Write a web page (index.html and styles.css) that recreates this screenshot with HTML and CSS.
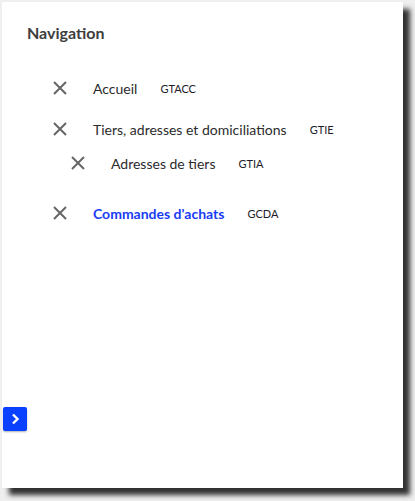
FILE: index.html
```html
<!DOCTYPE html>
<html lang="fr">
<head>
<meta charset="utf-8">
<link rel="stylesheet" href="styles.css">
</head>
<body>
<div class="panel">
  <h1 class="title">Navigation</h1>
  <ul class="nav">
    <li class="item">
      <span class="close"><svg viewBox="0 0 14 14" width="14" height="14"><path d="M1 1L13 13M13 1L1 13" stroke="#666" stroke-width="2"/></svg></span>
      <span class="label">Accueil</span><span class="code">GTACC</span>
    </li>
    <li class="item gap-md">
      <span class="close"><svg viewBox="0 0 14 14" width="14" height="14"><path d="M1 1L13 13M13 1L1 13" stroke="#666" stroke-width="2"/></svg></span>
      <span class="label">Tiers, adresses et domiciliations</span><span class="code">GTIE</span>
    </li>
    <li class="item sub gap-sm">
      <span class="close"><svg viewBox="0 0 14 14" width="14" height="14"><path d="M1 1L13 13M13 1L1 13" stroke="#666" stroke-width="2"/></svg></span>
      <span class="label">Adresses de tiers</span><span class="code">GTIA</span>
    </li>
    <li class="item active gap-lg">
      <span class="close"><svg viewBox="0 0 14 14" width="14" height="14"><path d="M1 1L13 13M13 1L1 13" stroke="#666" stroke-width="2"/></svg></span>
      <span class="label">Commandes d'achats</span><span class="code">GCDA</span>
    </li>
  </ul>
  <button class="toggle" type="button"><svg viewBox="0 0 24 24" width="24" height="24"><path d="M10 7.5L14.5 12L10 16.5" fill="none" stroke="#fff" stroke-width="2.4"/></svg></button>
</div>
</body>
</html>
```
FILE: styles.css
```css
html, body {
  margin: 0;
  padding: 0;
  background: #efefef;
  font-family: Lato, "Noto Sans", sans-serif;
}
body {
  height: 501px;
  overflow: hidden;
  padding: 2px 0 0 2px;
  box-sizing: border-box;
}
.panel {
  position: relative;
  box-sizing: border-box;
  width: 401px;
  height: 486px;
  background: #fff;
  box-shadow: 7px 7px 5px rgba(0,0,0,0.8);
  padding: 21px 0 0 25px;
}
.title {
  margin: 0;
  font-size: 16px;
  font-weight: 700;
  color: #3d3d3d;
  line-height: 20px;
}
.nav {
  list-style: none;
  margin: 0;
  padding: 35px 0 0 26px;
}
.item {
  display: flex;
  align-items: center;
  height: 20px;
}
.gap-md { margin-top: 21px; }
.gap-sm { margin-top: 14px; }
.gap-lg { margin-top: 30px; }
.item.sub { padding-left: 18px; }
.close {
  display: flex;
  width: 14px;
  height: 14px;
  margin-right: 26px;
}
.label {
  font-size: 14px;
  color: #2b2b2b;
}
.code {
  font-size: 11px;
  color: #1c1c28;
  margin-left: 23px;
}
.active .label {
  color: #1a3cf5;
  font-weight: 700;
}
.toggle {
  position: absolute;
  left: 1px;
  top: 405px;
  width: 24px;
  height: 24px;
  padding: 0;
  border: none;
  border-radius: 2px;
  background: #0a40ff;
  display: flex;
  box-shadow: 0 1px 2px rgba(0,0,0,0.3);
}
```
